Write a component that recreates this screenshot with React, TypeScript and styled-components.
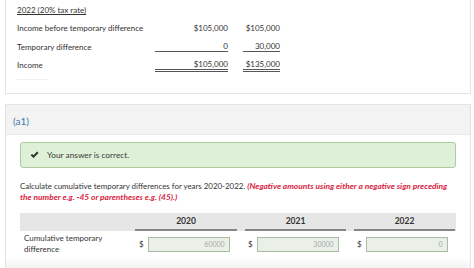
import React from 'react'
import styled, { createGlobalStyle } from 'styled-components'

const GlobalStyle = createGlobalStyle`
  body {
    margin: 0;
    background: #fff;
    font-family: Lato, 'Open Sans', sans-serif;
    color: #333;
  }
`

const Page = styled.div`
  padding: 0 3px 0 5px;
  width: 466px;
  height: 268px;
  overflow: hidden;
`

const TopCard = styled.div`
  border: 1px solid #e4e4e4;
  border-top: none;
  padding: 4px 11px 13px;
`

const Caption = styled.div`
  font-size: 8px;
  line-height: 12px;
  text-decoration: underline;
  color: #333;
`

const Table = styled.div`
  margin-top: 3px;
`

const Row = styled.div`
  display: flex;
  align-items: center;
  height: 18.5px;
  font-size: 8px;
`

const Label = styled.div`
  width: 138px;
  color: #333;
  white-space: nowrap;
`

const Amount = styled.div<{ $w: number; $gap?: number; $rule?: 'single' | 'double' }>`
  width: ${({ $w }) => $w}px;
  margin-left: ${({ $gap }) => $gap || 0}px;
  text-align: right;
  line-height: 10px;
  white-space: nowrap;
  border-bottom: ${({ $rule }) =>
    $rule === 'single' ? '1px solid #555' : $rule === 'double' ? '3px double #555' : '1px solid transparent'};
`

const Faint = styled.div`
  margin-top: 4.5px;
  width: 30px;
  border-top: 1px solid #f0f0f0;
`

const Card = styled.div`
  margin-top: 10px;
  border: 1px solid #e4e4e4;
`

const CardHeader = styled.div`
  background: #f3f3f3;
  border-bottom: 1px solid #e9e9e9;
  height: 30px;
  padding: 10px 0 0 7px;
  box-sizing: border-box;
  font-size: 10px;
  color: #3b78a6;
`

const Body = styled.div`
  padding: 7px 14px 0;
`

const Alert = styled.div`
  display: flex;
  align-items: center;
  gap: 8px;
  height: 26px;
  box-sizing: border-box;
  padding-left: 9px;
  background: #dff0d8;
  border: 1px solid #aecb9f;
  border-radius: 3px;
  font-size: 8.3px;
  color: #3a3a3a;
`

const Instructions = styled.p`
  margin: 13px 0 0;
  padding-right: 6px;
  font-size: 7.9px;
  line-height: 11px;
  color: #333;
`

const Hint = styled.span`
  font-size: 8.4px;
  color: #d9233d;
  font-weight: 700;
  font-style: italic;
`

const Grid = styled.div`
  margin-top: 10px;
`

const HeadRow = styled.div`
  display: flex;
  background: #e6e6e6;
  height: 18px;
`

const HeadCell = styled.div<{ $first?: boolean }>`
  width: ${({ $first }) => ($first ? '115px' : '101px')};
  margin-left: ${({ $first }) => ($first ? '0' : '8px')};
  box-sizing: border-box;
  border-bottom: ${({ $first }) => ($first ? 'none' : '2px solid #858585')};
  display: flex;
  align-items: center;
  justify-content: center;
  font-size: 8.5px;
  font-weight: 700;
  color: #333;
  &:nth-child(2) {
    margin-left: 0;
    width: 102px;
  }
`

const DataRow = styled.div`
  display: flex;
  align-items: center;
  height: 26px;
`

const RowLabel = styled.div`
  width: 111px;
  padding-left: 4px;
  font-size: 8px;
  line-height: 11px;
  color: #333;
`

const InputCell = styled.div<{ $gap: number }>`
  width: 101px;
  margin-left: ${({ $gap }) => $gap}px;
  display: flex;
  align-items: center;
  padding-left: 4px;
  box-sizing: border-box;
  font-size: 8px;
  color: #333;
`

const Field = styled.div`
  margin-left: 4px;
  width: 82px;
  height: 15px;
  box-sizing: border-box;
  border: 1px solid #a7bda2;
  background: #eaf0e8;
  font-size: 7px;
  color: #a8a8a8;
  text-align: right;
  padding-right: 4px;
  line-height: 13px;
`

const Shade = styled.div`
  height: 12px;
  margin: 0 -14px;
  background: linear-gradient(#fff, #f1f1f1);
`

const Check = () => (
  <svg width="9" height="8" viewBox="0 0 9 8">
    <path d="M0.6 4.3 L2.1 2.9 L3.5 4.3 L7.1 0.6 L8.5 2 L3.5 7 Z" fill="#28352a" />
  </svg>
)

const App = () => {
  const cols = [
    { year: '2020', value: '60000', gap: 0 },
    { year: '2021', value: '30000', gap: 8 },
    { year: '2022', value: '0', gap: 8 },
  ]
  return (
    <Page>
      <GlobalStyle />
      <TopCard>
        <Caption>2022 (20% tax rate)</Caption>
        <Table>
          <Row>
            <Label>Income before temporary difference</Label>
            <Amount $w={73}>$105,000</Amount>
            <Amount $w={37} $gap={15}>$105,000</Amount>
          </Row>
          <Row>
            <Label>Temporary difference</Label>
            <Amount $w={73} $rule="single">0</Amount>
            <Amount $w={37} $gap={15} $rule="single">30,000</Amount>
          </Row>
          <Row>
            <Label>Income</Label>
            <Amount $w={73} $rule="double">$105,000</Amount>
            <Amount $w={37} $gap={15} $rule="double">$135,000</Amount>
          </Row>
        </Table>
        <Faint />
      </TopCard>
      <Card>
        <CardHeader>(a1)</CardHeader>
        <Body>
          <Alert>
            <Check />
            Your answer is correct.
          </Alert>
          <Instructions>
            Calculate cumulative temporary differences for years 2020-2022.{' '}
            <Hint>(Negative amounts using either a negative sign preceding the number e.g. -45 or parentheses e.g. (45).)</Hint>
          </Instructions>
          <Grid>
            <HeadRow>
              <HeadCell $first />
              {cols.map((c) => (
                <HeadCell key={c.year}>{c.year}</HeadCell>
              ))}
            </HeadRow>
            <DataRow>
              <RowLabel>
                Cumulative temporary
                <br />
                difference
              </RowLabel>
              {cols.map((c) => (
                <InputCell key={c.year} $gap={c.gap}>
                  $<Field>{c.value}</Field>
                </InputCell>
              ))}
            </DataRow>
            <Shade />
          </Grid>
        </Body>
      </Card>
    </Page>
  )
}

export default App
